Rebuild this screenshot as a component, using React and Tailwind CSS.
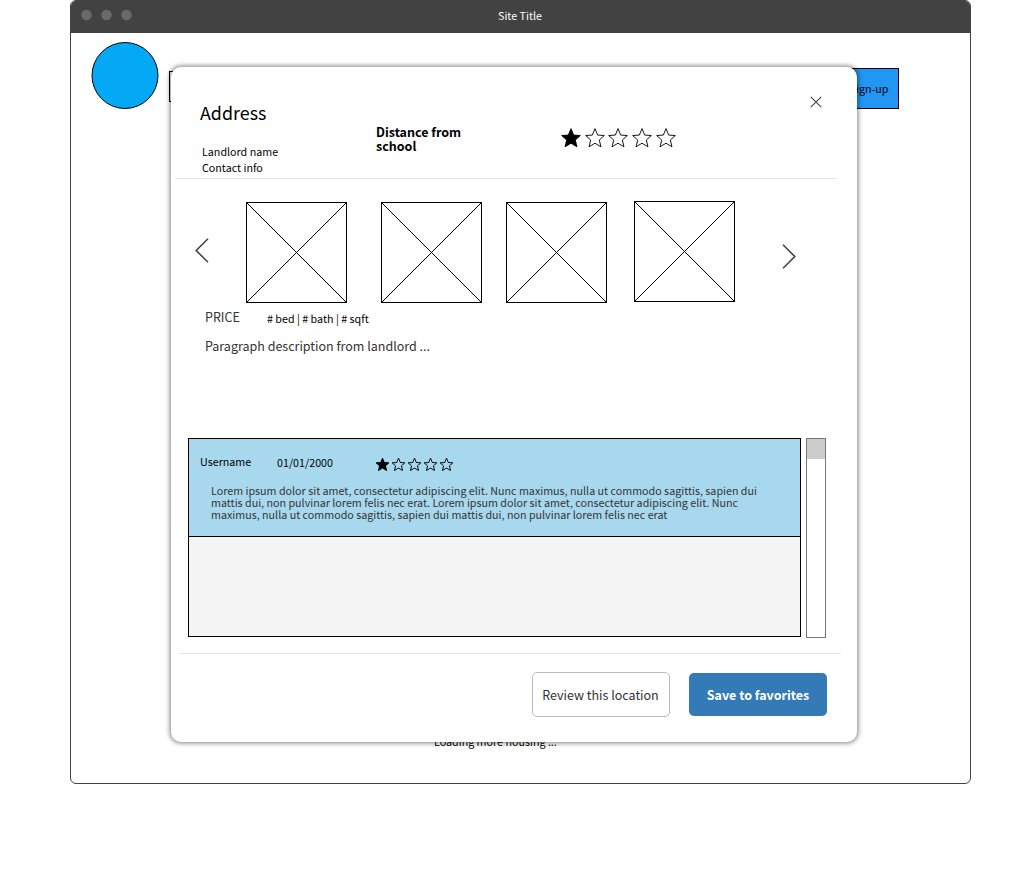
const STAR = "M12 1.8 L14.9 8.8 L22.2 9.3 L16.7 14.2 L18.5 21.6 L12 17.7 L5.5 21.6 L7.3 14.2 L1.8 9.3 L9.1 8.8 Z";

function Star({ filled, className, stroke }) {
  return (
    <svg viewBox="0 0 24 24" className={className} fill={filled ? "#000" : "none"} stroke="#000" strokeWidth={stroke}>
      <path d={STAR} />
    </svg>
  );
}

function Rating({ value, className, starClass, stroke }) {
  return (
    <div className={className}>
      {[1, 2, 3, 4, 5].map((n) => (
        <Star key={n} filled={n <= value} className={starClass} stroke={stroke} />
      ))}
    </div>
  );
}

function ImagePlaceholder({ className }) {
  return (
    <div className={`size-[101px] shrink-0 border border-black ${className}`}>
      <svg viewBox="0 0 99 99" className="block size-[99px]" stroke="#000" strokeWidth="1" shapeRendering="crispEdges">
        <path d="M0 0 L99 99 M99 0 L0 99" />
      </svg>
    </div>
  );
}

function Chevron({ d, className }) {
  return (
    <svg viewBox="0 0 14 25" className={className} fill="none" stroke="#444" strokeWidth="1.6">
      <path d={d} />
    </svg>
  );
}

function Modal() {
  return (
    <div className="absolute left-[171px] top-[67px] flex h-[675px] w-[686px] flex-col rounded-[10px] bg-white shadow-[0_0_5px_1px_rgba(0,0,0,0.5)]">
      <header className="ml-1 flex h-[112px] w-[662px] items-start border-b border-[#e4e4e4]">
        <div className="ml-[25px] w-[176px] shrink-0">
          <h1 className="mt-[33px] text-[17.86px] leading-[24px]">Address</h1>
          <div className="ml-[2px] mt-[20px] text-[10.72px] leading-[16px]">
            <p>Landlord name</p>
            <p>Contact info</p>
          </div>
        </div>
        <p className="mt-[58px] w-[184px] shrink-0 text-[12.5px] font-bold leading-[14px]">
          Distance from
          <br />
          school
        </p>
        <Rating value={1} className="mt-[60px] flex gap-[1.7px]" starClass="block size-[22px]" stroke={1} />
        <button aria-label="Close" className="ml-[133px] mt-[29px]">
          <svg viewBox="0 0 12 12" className="block size-3" stroke="#444" strokeWidth="1.1">
            <path d="M0.8 0.8 L11.2 11.2 M11.2 0.8 L0.8 11.2" />
          </svg>
        </button>
      </header>

      <section className="flex h-[130px] items-start pt-[22px]">
        <Chevron d="M13 0.8 L1.2 12.5 L13 24.2" className="ml-6 mt-[37px] h-[25px] w-[14px] shrink-0" />
        <ImagePlaceholder className="ml-[37px] mt-px" />
        <ImagePlaceholder className="ml-[34px] mt-px" />
        <ImagePlaceholder className="ml-6 mt-px" />
        <ImagePlaceholder className="ml-[27px]" />
        <Chevron d="M1 0.8 L12.8 12.5 L1 24.2" className="ml-[47px] mt-[43px] h-[25px] w-[14px] shrink-0" />
      </section>

      <section className="ml-[34px] h-[129px] text-[#333]">
        <div className="flex">
          <span className="w-[62px] text-[12.5px] leading-[16px]">PRICE</span>
          <span className="mt-[2px] text-[10.72px] leading-[16px] text-black"># bed | # bath | # sqft</span>
        </div>
        <p className="mt-[11px] text-[12.5px] leading-[16px]">Paragraph description from landlord ...</p>
      </section>

      <section className="ml-[17px] flex gap-[5px]">
        <div className="h-[199px] w-[613px] border border-black bg-[#f4f4f4]">
          <article className="h-[98px] border-b border-black bg-[#a8d8ee]">
            <div className="flex h-[46px] items-start pl-[11px] text-[10.72px] leading-[16px]">
              <span className="mt-[15px] w-[77px]">Username</span>
              <span className="mt-[16px] w-[98px]">01/01/2000</span>
              <Rating value={1} className="mt-[18px] flex gap-px" starClass="block size-[15px]" stroke={1.5} />
            </div>
            <p className="ml-[22px] whitespace-nowrap text-[10.72px] leading-[12px] text-[#333]">
              Lorem ipsum dolor sit amet, consectetur adipiscing elit. Nunc maximus, nulla ut commodo sagittis, sapien dui
              <br />
              mattis dui, non pulvinar lorem felis nec erat. Lorem ipsum dolor sit amet, consectetur adipiscing elit. Nunc
              <br />
              maximus, nulla ut commodo sagittis, sapien dui mattis dui, non pulvinar lorem felis nec erat
            </p>
          </article>
        </div>
        <div className="h-[200px] w-5 border border-[#777] bg-white">
          <div className="h-5 bg-[#ccc]" />
        </div>
      </section>

      <footer className="ml-2 mt-[15px] flex w-[662px] items-start border-t border-[#e4e4e4] pl-[353px] pt-[18px] text-[12.5px]">
        <button className="h-[45px] w-[138px] whitespace-nowrap rounded-[5px] border border-[#bbb] bg-white pr-px pt-[2px] text-[#333]">Review this location</button>
        <button className="ml-[19px] mt-px h-[43px] w-[138px] whitespace-nowrap rounded-[5px] bg-[#337ab7] pt-[2px] font-bold text-white">Save to favorites</button>
      </footer>
    </div>
  );
}

export default function App() {
  return (
    <main className="relative h-[894px] w-[1020px] overflow-hidden bg-white font-['Noto_Sans_CJK_SC','Noto_Sans',sans-serif] text-black">
      <div className="ml-[70px] flex h-[784px] w-[901px] flex-col overflow-hidden rounded-[6px] border border-[#424242] bg-white">
        <div className="flex h-8 shrink-0 items-start bg-[#424242]">
          <svg viewBox="0 0 52 12" className="ml-[10px] mr-[365px] mt-2 h-3 w-[52px]" fill="#6a6a6a">
            <circle cx="5.5" cy="6" r="5.2" />
            <circle cx="25.5" cy="6" r="5.2" />
            <circle cx="45.5" cy="6" r="5.2" />
          </svg>
          <span className="mt-[7px] text-[10.72px] leading-[16px] text-white">Site Title</span>
        </div>
        <div className="flex items-start">
          <svg viewBox="0 0 68 68" className="ml-[20px] mt-[9px] size-[68px]" fill="#03a9f4" stroke="#000">
            <circle cx="34" cy="33.5" r="33" />
          </svg>
          <div className="ml-[10px] mt-[38px] h-[31px] w-[600px] border border-black" />
          <button className="ml-[70px] mt-[35px] h-[41px] w-[60px] border border-black bg-[#2196f3] pt-[2px] text-[10.72px]">Sign-up</button>
        </div>
        <p className="ml-[363px] mt-[624px] text-[10.72px] leading-[16px]">Loading more housing ...</p>
      </div>
      <Modal />
    </main>
  );
}
